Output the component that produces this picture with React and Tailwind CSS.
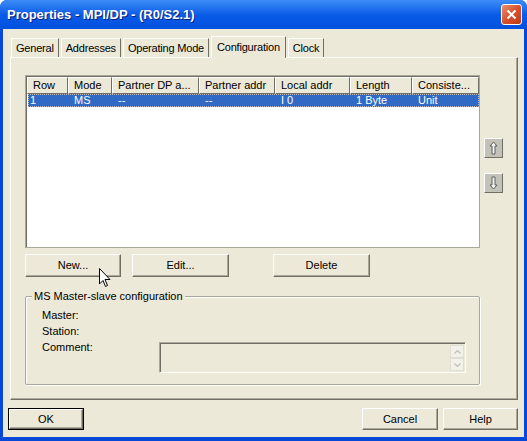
import React from 'react'

const font = { fontFamily: '"Liberation Sans", Arial, sans-serif' }

function Btn({ className = '', children, isDefault }) {
    return (
        <div className={`${className} ${isDefault ? 'border border-black' : ''} bg-[#ECE9D8]`}>
            <div className="flex h-full w-full items-center justify-center border-t border-l border-b border-r border-t-white border-l-white border-b-[#716F64] border-r-[#716F64] shadow-[inset_-1px_-1px_0_#ACA899] text-[11px] text-black">
                {children}
            </div>
        </div>
    )
}

function Tab({ label, active }) {
    if (active) {
        return (
            <div className="relative z-10 -mb-px flex h-[22px] items-start border-t border-l border-r border-t-white border-l-white border-r-[#716F64] bg-[#ECE9D8] px-[5px] pt-[2px] text-[11px] tracking-[-0.2px]">
                {label}
            </div>
        )
    }
    return (
        <div className="flex h-[19px] items-center border-t border-l border-r border-t-white border-l-white border-r-[#716F64] bg-[#ECE9D8] px-[4px] text-[11px] tracking-[-0.2px]">
            {label}
        </div>
    )
}

const cols = [
    ['Row', 41, '1'],
    ['Mode', 44, 'MS'],
    ['Partner DP a...', 87, '--'],
    ['Partner addr', 76, '--'],
    ['Local addr', 75, 'I 0'],
    ['Length', 62, '1 Byte'],
    ['Consiste...', 67, 'Unit'],
]

function ArrowBtn({ down }) {
    return (
        <div className="flex h-[20px] w-[19px] items-center justify-center border-t border-l border-b border-r border-t-white border-l-white border-b-[#716F64] border-r-[#716F64] bg-[#C4C2B8]">
            <svg width="9" height="14" viewBox="0 0 9 14" style={{ transform: down ? 'rotate(180deg)' : 'none' }}>
                <path d="M4.5 1 L8 5 L6 5 L6 13 L3 13 L3 5 L1 5 Z" fill="#F0F0F0" stroke="#5E5E5E" strokeWidth="1" />
            </svg>
        </div>
    )
}

export default function App() {
    return (
        <div className="flex h-[441px] w-[527px] flex-col overflow-hidden rounded-t-[7px] bg-[#0848D8]" style={font}>
            {/* title bar */}
            <div className="flex h-[29px] shrink-0 items-center justify-between bg-gradient-to-b from-[#3C8CF8] via-[#0A5CE8] to-[#0250DE] pl-[7px] pr-[5px]">
                <span className="text-[13px] font-bold text-white [text-shadow:1px_1px_0_#0A1E80]">Properties - MPI/DP - (R0/S2.1)</span>
                <div className="flex h-[21px] w-[21px] items-center justify-center rounded-[3px] border border-white bg-gradient-to-br from-[#E8906C] via-[#D8502C] to-[#C03A18]">
                    <svg width="11" height="11" viewBox="0 0 11 11">
                        <path d="M1.5 1.5 L9.5 9.5 M9.5 1.5 L1.5 9.5" stroke="white" strokeWidth="2" />
                    </svg>
                </div>
            </div>

            {/* body */}
            <div className="mx-[3px] mb-[4px] flex flex-1 flex-col bg-[#ECE9D8] text-black">
                {/* tabs */}
                <div className="ml-[8px] mt-[7px] flex h-[21px] items-end gap-[2px]">
                    <Tab label="General" />
                    <Tab label="Addresses" />
                    <Tab label="Operating Mode" />
                    <Tab label="Configuration" active />
                    <Tab label="Clock" />
                </div>

                {/* panel */}
                <div className="ml-[7px] flex h-[343px] w-[508px] flex-col border-t border-l border-b border-r border-t-white border-l-white border-b-[#716F64] border-r-[#716F64] shadow-[inset_-1px_-1px_0_#ACA899]">
                    <div className="ml-[14px] mt-[17px] flex">
                        {/* list */}
                        <div className="h-[173px] w-[455px] border border-[#ACA899] bg-white shadow-[inset_1px_1px_0_#716F64]">
                            <div className="ml-px mt-px flex">
                                {cols.map(([h, w]) => (
                                    <div key={h} style={{ width: w }} className="flex h-[17px] shrink-0 items-center overflow-hidden whitespace-nowrap border-t border-l border-b border-r border-t-white border-l-white border-b-[#716F64] border-r-[#716F64] bg-[#ECE9D8] pl-[5px] text-[11px]">
                                        {h}
                                    </div>
                                ))}
                            </div>
                            <div className="ml-[2px] flex h-[13px] w-[451px] border border-dotted border-[#BBBBBB] bg-[#316AC5] text-white">
                                {cols.map(([h, w, v], i) => (
                                    <div key={h} style={{ width: i === 0 ? w - 1 : w }} className={`flex shrink-0 items-center whitespace-nowrap text-[11px] leading-[11px] ${i === 0 ? 'pl-[1px]' : 'pl-[5px]'}`}>
                                        {v}
                                    </div>
                                ))}
                            </div>
                        </div>
                        {/* arrows */}
                        <div className="ml-[4px] mt-[63px] flex flex-col gap-[15px]">
                            <ArrowBtn />
                            <ArrowBtn down />
                        </div>
                    </div>

                    {/* action buttons */}
                    <div className="ml-[14px] mt-[6px] flex h-[23px]">
                        <Btn className="w-[96px]">New...</Btn>
                        <Btn className="ml-[11px] w-[97px]">Edit...</Btn>
                        <Btn className="ml-[44px] w-[97px]">Delete</Btn>
                    </div>

                    {/* group box */}
                    <div className="relative ml-[14px] mt-[19px] h-[89px] w-[455px] rounded-[2px] border border-[#ACA899] shadow-[1px_1px_0_white,inset_1px_1px_0_white]">
                        <div className="absolute -top-[8px] left-[6px] bg-[#ECE9D8] px-[2px] text-[11px] leading-[14px]">MS Master-slave configuration</div>
                        <div className="ml-[16px] mt-[10px] flex text-[11px] leading-[16px]">
                            <div className="flex w-[50px] flex-col">
                                <span>Master:</span>
                                <span>Station:</span>
                                <span>Comment:</span>
                            </div>
                            <div className="ml-[67px] mt-[35px] flex h-[31px] w-[307px] justify-end border border-t-[#ACA899] border-l-[#ACA899] border-b-white border-r-white bg-[#ECE9D8] shadow-[inset_1px_1px_0_#716F64]">
                                <div className="mr-[1px] mt-[2px] flex flex-col">
                                    <div className="flex h-[13px] w-[14px] items-center justify-center border border-[#E0DED4] bg-[#F2F1EA]">
                                        <svg width="7" height="4" viewBox="0 0 7 4"><path d="M0.5 3.5 L3.5 0.5 L6.5 3.5" fill="none" stroke="#C0BEB0" strokeWidth="1.2" /></svg>
                                    </div>
                                    <div className="flex h-[13px] w-[14px] items-center justify-center border border-[#E0DED4] bg-[#F2F1EA]">
                                        <svg width="7" height="4" viewBox="0 0 7 4"><path d="M0.5 0.5 L3.5 3.5 L6.5 0.5" fill="none" stroke="#C0BEB0" strokeWidth="1.2" /></svg>
                                    </div>
                                </div>
                            </div>
                        </div>
                    </div>
                </div>

                {/* bottom buttons */}
                <div className="mt-[8px] flex h-[22px]">
                    <Btn isDefault className="ml-[5px] w-[76px]">OK</Btn>
                    <Btn className="ml-[278px] w-[76px]">Cancel</Btn>
                    <Btn className="ml-[5px] w-[75px]">Help</Btn>
                </div>
            </div>

            {/* mouse cursor */}
            <svg className="pointer-events-none absolute left-[99px] top-[268px]" width="13" height="21" viewBox="0 0 13 21">
                <path d="M0.5 0.5 L0.5 16 L4 12.5 L6.5 18.5 L8.5 17.5 L6 11.5 L11 11.5 Z" fill="white" stroke="black" strokeWidth="1" />
            </svg>
        </div>
    )
}
